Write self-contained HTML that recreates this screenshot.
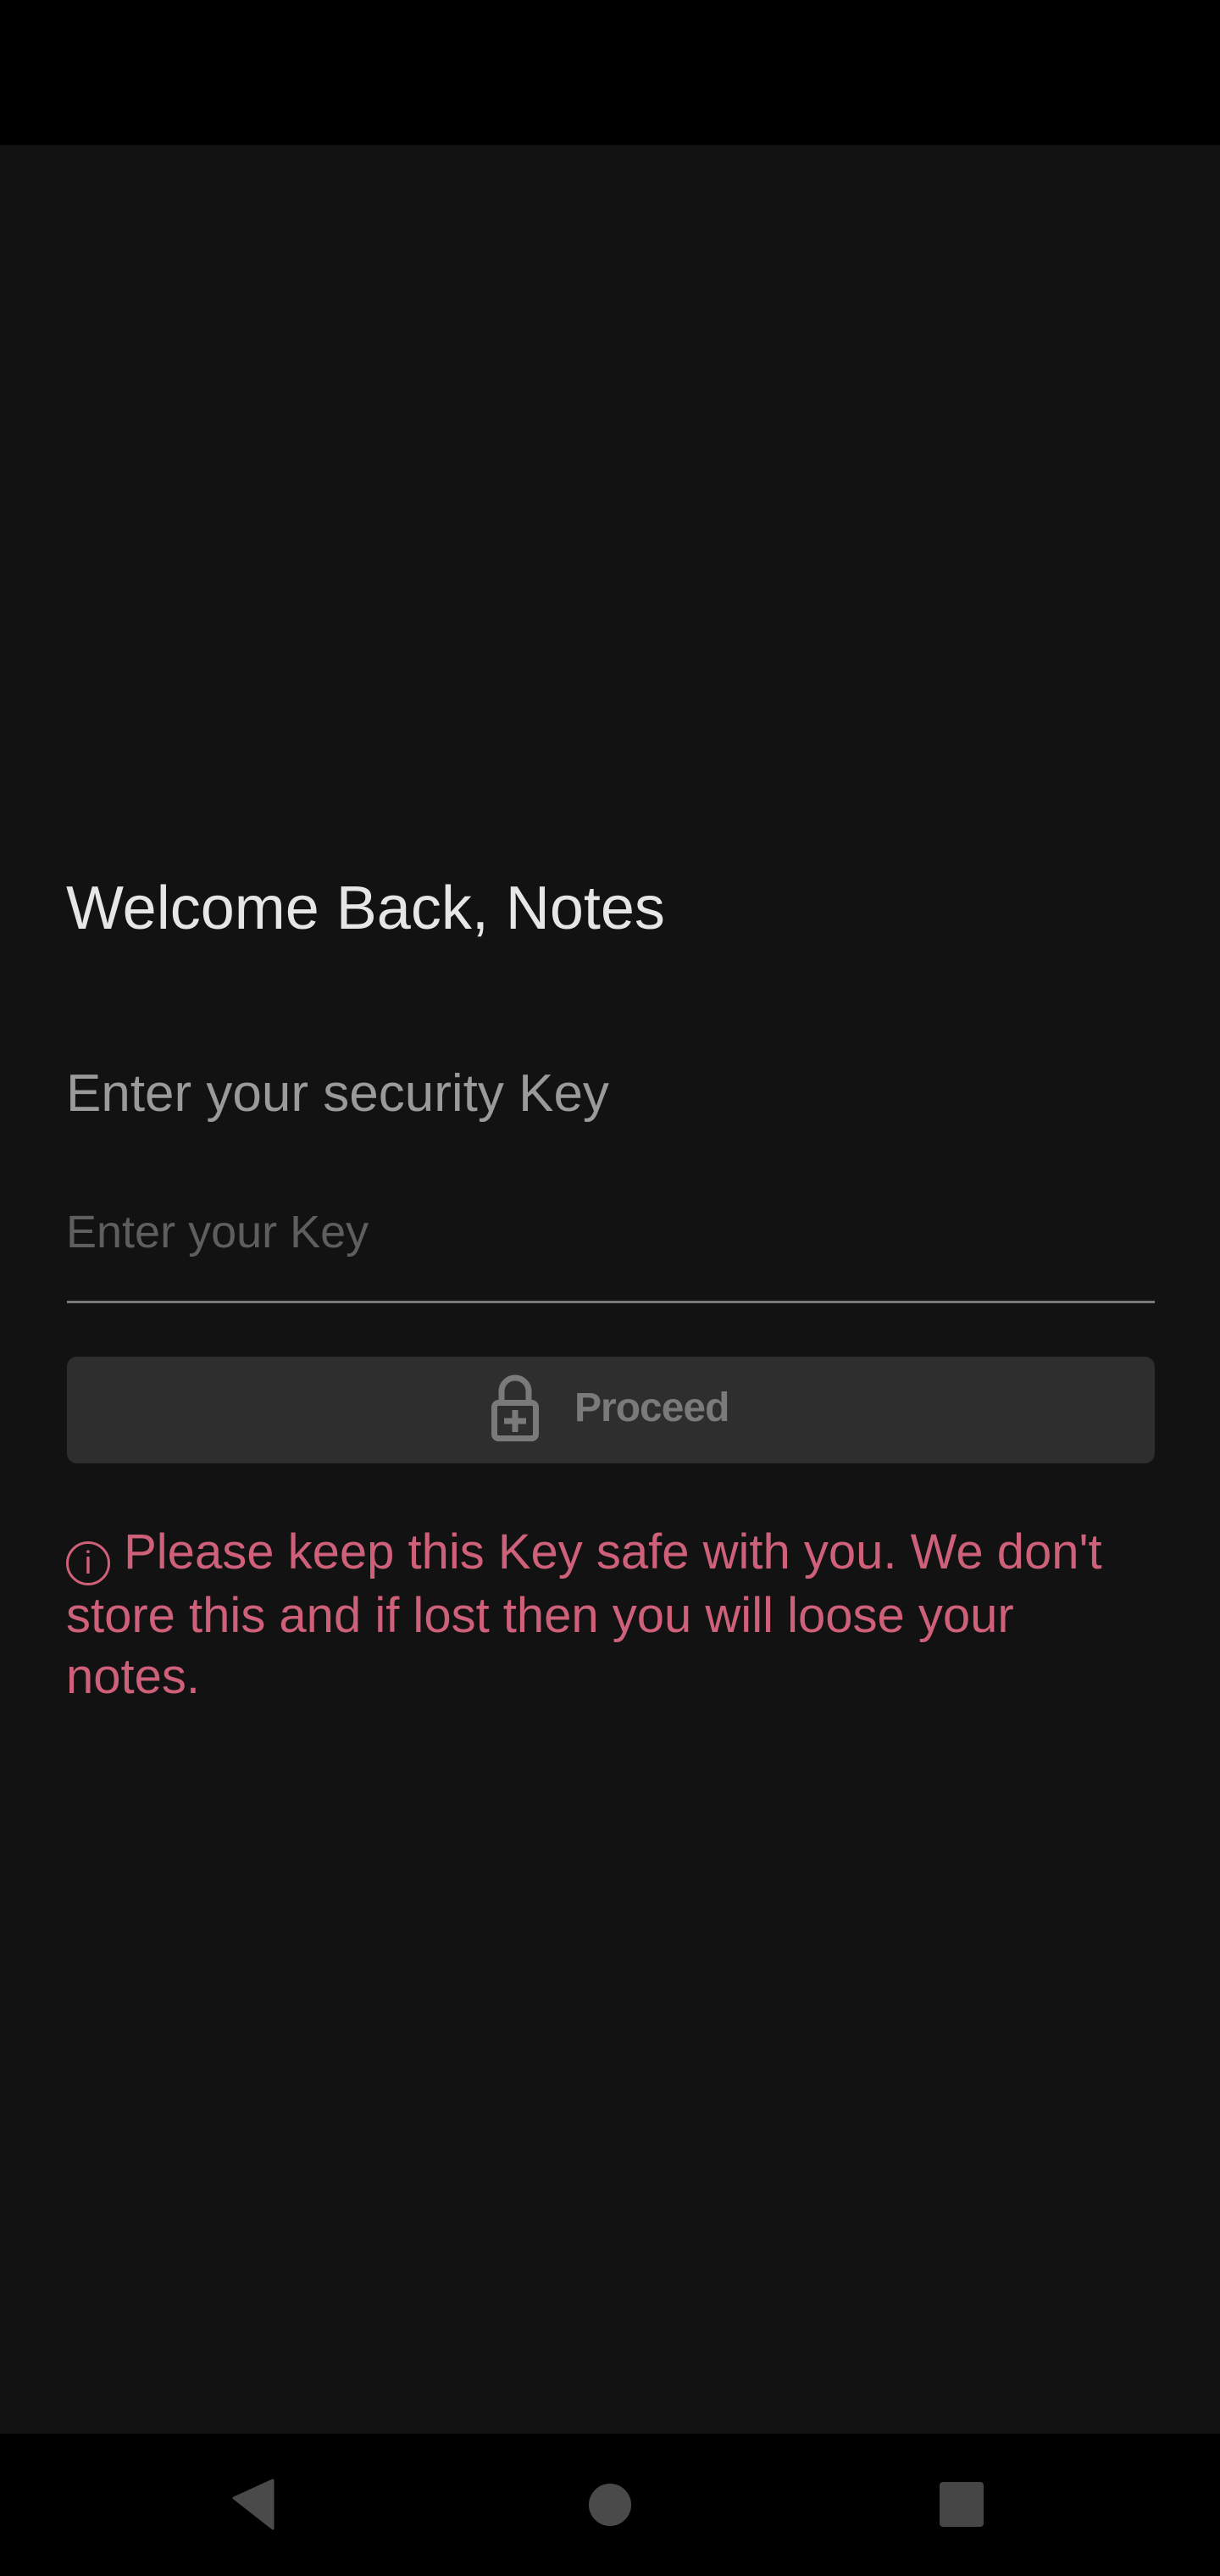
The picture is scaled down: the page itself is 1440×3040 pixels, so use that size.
<!DOCTYPE html>
<html><head><meta charset="utf-8"><style>
html,body{margin:0;padding:0;}
body{width:1440px;height:3040px;background:#121212;position:relative;overflow:hidden;font-family:"Liberation Sans",sans-serif;}
.t{position:absolute;white-space:nowrap;}
</style></head><body>
<div style="position:absolute;left:0;top:0;width:1440px;height:171px;background:#000"></div>
<div class="t" style="left:78px;top:1030px;font-size:72px;line-height:84px;color:#e6e6e6;">Welcome Back, Notes</div>
<div class="t" style="left:78px;top:1254px;font-size:62px;line-height:74px;color:#9a9a9a;">Enter your security Key</div>
<div class="t" style="left:78px;top:1421px;font-size:54px;line-height:66px;color:#5e5e5e;">Enter your Key</div>
<div style="position:absolute;left:79px;top:1535px;width:1284px;height:3px;background:#7a7a7a"></div>
<div style="position:absolute;left:79px;top:1601px;width:1284px;height:126px;background:#2e2e2e;border-radius:12px"></div>
<svg style="position:absolute;left:578px;top:1622px" width="60" height="80" viewBox="0 0 60 80">
<path d="M14 33 V20 A16 16 0 0 1 46 20 V33" fill="none" stroke="#7a7a7a" stroke-width="7"/>
<rect x="5.5" y="33.5" width="49" height="42" rx="5" fill="none" stroke="#7a7a7a" stroke-width="7"/>
<path d="M30 42 V68 M17 55 H43" stroke="#7a7a7a" stroke-width="7"/>
</svg>
<div class="t" style="left:678px;top:1632px;font-size:48px;line-height:60px;color:#7a7a7a;font-weight:bold;letter-spacing:-1px">Proceed</div>
<div style="position:absolute;left:78px;top:1796px;font-size:58px;line-height:72px;color:#cf6079;white-space:nowrap;">
<span style="display:inline-block;width:52px;height:52px;border:3px solid #cf6079;border-radius:50%;box-sizing:border-box;vertical-align:-6px;text-align:center;font-size:38px;line-height:46px;">i</span> Please keep this Key safe with you. We don't<br>store this and if lost then you will loose your<br>notes.</div>
<div style="position:absolute;left:0;top:2872px;width:1440px;height:168px;background:#000"></div>
<svg style="position:absolute;left:0;top:2872px" width="1440" height="168">
<path d="M322 55 L276 76 L322 112Z" fill="#4a4a4a" stroke="#4a4a4a" stroke-width="3" stroke-linejoin="round"/>
<circle cx="720" cy="84" r="25" fill="#4a4a4a"/>
<rect x="1109" y="57" width="52" height="53" rx="4" fill="#464646"/>
</svg>
</body></html>
